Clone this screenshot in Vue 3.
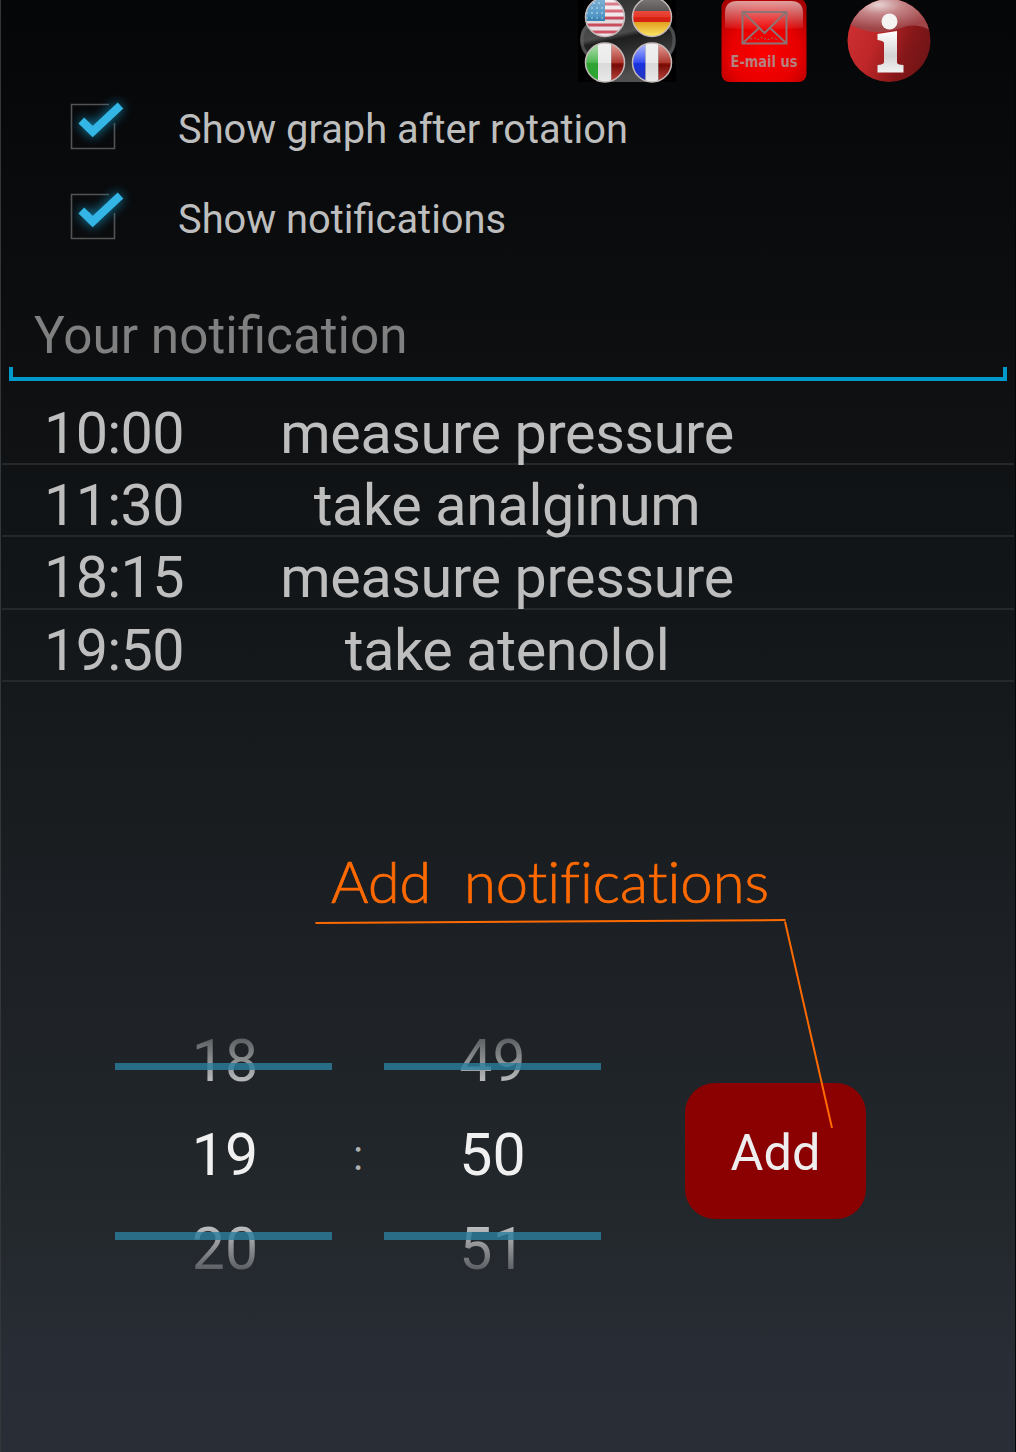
<script setup>
const options = ['Show graph after rotation', 'Show notifications']
const reminders = [
  { time: '10:00', text: 'measure pressure' },
  { time: '11:30', text: 'take analginum' },
  { time: '18:15', text: 'measure pressure' },
  { time: '19:50', text: 'take atenolol' },
]
const pickers = [
  ['18', '19', '20'],
  ['49', '50', '51'],
]
</script>

<template>
  <main class="screen">
    <header class="toolbar">
      <svg class="flags" width="100" height="85" viewBox="0 0 100 85">
        <defs>
          <linearGradient id="plate" x1="0" y1="0" x2=".25" y2="1">
            <stop offset="0" stop-color="#2c2c2c" /><stop offset=".48" stop-color="#4c4c4c" />
            <stop offset=".54" stop-color="#1e1e1e" /><stop offset="1" stop-color="#505050" />
          </linearGradient>
          <linearGradient id="gloss" x1="0" y1="0" x2="0" y2="1">
            <stop offset="0" stop-color="#fff" stop-opacity=".35" /><stop offset=".5" stop-color="#fff" stop-opacity=".1" />
            <stop offset=".52" stop-color="#000" stop-opacity=".06" /><stop offset="1" stop-color="#fff" stop-opacity=".08" />
          </linearGradient>
          <linearGradient id="gold" x1="0" y1="0" x2="0" y2="1">
            <stop offset="0" stop-color="#eda51c" /><stop offset="1" stop-color="#ffee62" />
          </linearGradient>
          <linearGradient id="green" x1="0" y1="0" x2="0" y2="1">
            <stop offset="0" stop-color="#8bcf8b" /><stop offset=".5" stop-color="#35ac39" /><stop offset="1" stop-color="#16a31b" />
          </linearGradient>
          <linearGradient id="blue" x1="0" y1="0" x2="0" y2="1">
            <stop offset="0" stop-color="#8798ff" /><stop offset=".5" stop-color="#1b35ef" /><stop offset="1" stop-color="#1526ae" />
          </linearGradient>
          <linearGradient id="crimson" x1="0" y1="0" x2="0" y2="1">
            <stop offset="0" stop-color="#d56d64" /><stop offset=".5" stop-color="#a01e14" /><stop offset=".55" stop-color="#7d0905" /><stop offset="1" stop-color="#c34137" />
          </linearGradient>
          <clipPath id="us"><circle cx="28" cy="17" r="19.500" /></clipPath>
          <clipPath id="de"><circle cx="75" cy="17" r="19.500" /></clipPath>
          <clipPath id="it"><circle cx="28" cy="62.500" r="19.500" /></clipPath>
          <clipPath id="fr"><circle cx="75" cy="62.500" r="19.500" /></clipPath>
        </defs>
        <rect x="1" width="98" height="82" fill="#000" />
        <path d="M18 0H84L90 22Q99 28 99 40Q99 52 90 58L82 82H20L12 58Q3 52 3 40Q3 28 12 22Z" fill="url(#plate)" />
        <path d="M11 26Q5 30 5 40Q5 50 11 54M91 26Q97 30 97 40Q97 50 91 54" fill="none" stroke="#5e5e5e" stroke-width="3" opacity=".7" />
        <g clip-path="url(#us)">
          <rect x="5" y="-3" width="44" height="42" fill="#eee6ea" />
          <path d="M5 4H48M5 11H48M5 18H48M5 25H48M5 32H48" stroke="#cf4c5e" stroke-width="3" />
          <rect x="5" y="-3" width="23" height="24" fill="#3b89bd" />
          <path d="M11 3H26M9 8H26M9 13H26M9 18H26" stroke="#8fc3e2" stroke-width="1.500" stroke-dasharray="2 3" />
        </g>
        <g clip-path="url(#de)">
          <rect x="54" y="-3" width="42" height="14" fill="#383333" />
          <rect x="54" y="11" width="42" height="11" fill="#e32212" />
          <rect x="54" y="22" width="42" height="16" fill="url(#gold)" />
        </g>
        <g clip-path="url(#it)">
          <rect x="7" y="42" width="14" height="42" fill="url(#green)" />
          <rect x="21" y="42" width="13.500" height="42" fill="#e8e8e8" />
          <rect x="34.500" y="42" width="15" height="42" fill="url(#crimson)" />
        </g>
        <g clip-path="url(#fr)">
          <rect x="54" y="42" width="14.500" height="42" fill="url(#blue)" />
          <rect x="68.500" y="42" width="13" height="42" fill="#e8e8e8" />
          <rect x="81.500" y="42" width="15" height="42" fill="url(#crimson)" />
        </g>
        <g fill="url(#gloss)" stroke="#c4b9b9" stroke-width="1.500">
          <circle cx="28" cy="17" r="19.500" /><circle cx="75" cy="17" r="19.500" />
          <circle cx="28" cy="62.500" r="19.500" /><circle cx="75" cy="62.500" r="19.500" />
        </g>
      </svg>

      <svg class="mail" width="86" height="85" viewBox="0 0 86 85">
        <defs>
          <radialGradient id="mailRed" cx=".5" cy=".65" r=".72">
            <stop offset="0" stop-color="#fb0000" /><stop offset=".55" stop-color="#e80000" /><stop offset="1" stop-color="#a80000" />
          </radialGradient>
          <linearGradient id="mailGloss" x1="0" y1="0" x2="0" y2="1">
            <stop offset="0" stop-color="#fff" stop-opacity=".62" /><stop offset="1" stop-color="#fff" stop-opacity=".03" />
          </linearGradient>
        </defs>
        <rect x=".5" y="-1" width="85" height="83" rx="8" fill="url(#mailRed)" />
        <path d="M4 28V13Q4 1 16 1H70Q82 1 82 13V28Q43 32 4 28Z" fill="url(#mailGloss)" />
        <g fill="none" stroke="#8c7474" stroke-width="2">
          <rect x="21.500" y="12" width="44" height="31.500" />
          <path d="M22 12L43.500 33L65 12M22 43L39 27M65 43L48 27" />
          <path d="M29 39L33 38L37 40L41 37L46 40L51 38L58 40" stroke-width="1" stroke-dasharray="2 2" />
        </g>
        <text x="9.500" y="66.500" textLength="67" lengthAdjust="spacingAndGlyphs" class="mail-label">E-mail us</text>
      </svg>

      <svg class="info" width="84" height="85" viewBox="0 0 84 85">
        <defs>
          <linearGradient id="ball" x1="0" y1=".2" x2="1" y2=".6">
            <stop offset="0" stop-color="#cf3032" /><stop offset=".4" stop-color="#bd2628" /><stop offset=".75" stop-color="#851719" /><stop offset="1" stop-color="#701416" />
          </linearGradient>
          <radialGradient id="shine" cx=".38" cy=".2" r=".7">
            <stop offset="0" stop-color="#e6d3d3" /><stop offset=".4" stop-color="#c58587" /><stop offset="1" stop-color="#9f4548" />
          </radialGradient>
          <linearGradient id="letter" x1="0" y1="0" x2="0" y2="1">
            <stop offset="0" stop-color="#fff" /><stop offset=".6" stop-color="#d3d3d3" /><stop offset="1" stop-color="#f2f2f2" />
          </linearGradient>
          <clipPath id="disc"><circle cx="42" cy="40.500" r="41.500" /></clipPath>
        </defs>
        <g clip-path="url(#disc)">
          <rect width="84" height="85" fill="url(#ball)" />
          <path d="M0-2H84V31Q70 22 54 28Q26 38 0 23Z" fill="url(#shine)" />
        </g>
        <circle cx="42.500" cy="21.500" r="8" fill="#f6f3f3" />
        <path d="M30.500 34L50 31V62.500Q50 64.500 56.500 65V72.500H30.500V65Q37 64.500 37 62V43Q37 41 30.500 40Z" fill="url(#letter)" />
      </svg>
    </header>

    <label v-for="option in options" :key="option" class="option">
      <svg class="check" width="80" height="90" viewBox="0 0 80 90">
        <path d="M49 19.500H11.500V63.500H54.500V38" fill="none" stroke="#525354" stroke-width="1.600" />
        <path class="tick" d="M21.300 35.500L32.700 46.500L60.500 20.500" />
      </svg>
      <span>{{ option }}</span>
    </label>

    <section class="field">
      <span>Your notification</span>
    </section>

    <ul class="reminders">
      <li v-for="(item, i) in reminders" :key="i">
        <time>{{ item.time }}</time>
        <span class="what">{{ item.text }}</span>
      </li>
    </ul>

    <section class="editor">
      <div class="picker">
        <span v-for="n in pickers[0]" :key="n">{{ n }}</span>
      </div>
      <div class="colon">:</div>
      <div class="picker">
        <span v-for="n in pickers[1]" :key="n">{{ n }}</span>
      </div>
      <button class="add">Add</button>
    </section>

    <svg class="callout" width="1016" height="1452" viewBox="0 0 1016 1452">
      <path d="M315.500 923L785.500 920M785 921.500L832 1128" fill="none" stroke="#ff6a00" stroke-width="2" />
      <g class="hand">
        <text x="331" y="903" textLength="100" lengthAdjust="spacingAndGlyphs">Add</text>
        <text x="464" y="903" textLength="305" lengthAdjust="spacingAndGlyphs">notifications</text>
      </g>
    </svg>
  </main>
</template>

<style>
body { margin: 0; background: #000; }
</style>

<style scoped>
.screen {
  position: relative;
  box-sizing: border-box;
  width: 1016px;
  height: 1452px;
  overflow: hidden;
  display: flex;
  flex-direction: column;
  border-left: 1px solid #34373a;
  border-right: 1px solid #050607;
  background: linear-gradient(#050607 0%, #0c0d0f 20%, #14181a 46%, #1c2024 64%, #22272b 82%, #282c34 93%, #292d35 100%);
  color: #bebebe;
  font-family: Roboto, "Noto Sans", sans-serif;
}
.toolbar { display: flex; height: 85px; padding-left: 576px; flex: none; }
.toolbar svg { display: block; }
.mail { margin-left: 44px; overflow: visible; }
.info { margin-left: 40px; }
.mail-label { font: bold 15px "DejaVu Sans", sans-serif; fill: #b58080; }
.option { display: flex; align-items: center; height: 90px; flex: none; font-size: 39.850px; line-height: 90px; white-space: nowrap; }
.check { margin-left: 59px; margin-right: 38px; flex: none; overflow: visible; }
.tick { fill: none; stroke: #33b5e5; stroke-width: 8.200px; filter: drop-shadow(0 0 6px #168fba); }
.field {
  position: relative;
  flex: none;
  height: 92px;
  margin: 24px 8px 0;
  padding-left: 25px;
  box-sizing: border-box;
  border-bottom: 4px solid #0099cc;
  font-size: 51.300px;
  line-height: 94px;
  color: #808080;
}
.field::before, .field::after {
  content: "";
  position: absolute;
  bottom: 0;
  width: 4px;
  height: 10px;
  background: #0099cc;
}
.field::before { left: 0; }
.field::after { right: 0; }
.reminders { list-style: none; margin: 12px 1px 0; padding: 0; flex: none; }
.reminders li {
  display: flex;
  box-sizing: border-box;
  height: 72.200px;
  border-bottom: 2px solid #25282b;
  font-size: 57.500px;
  line-height: 81px;
}
.reminders time { width: 224px; padding-left: 42px; box-sizing: border-box; letter-spacing: -.65px; }
.what { width: 562px; text-align: center; white-space: nowrap; letter-spacing: -.37px; }
.editor { display: flex; align-items: center; margin-top: 332px; height: 283px; padding-left: 114px; flex: none; }
.picker { position: relative; width: 217px; height: 283px; display: flex; flex-direction: column; text-align: center; font-size: 59px; line-height: 93px; color: #f0f0f0; }
.picker::before, .picker::after { content: ""; position: absolute; left: 0; width: 217px; height: 7px; background: rgba(42, 126, 158, .8); z-index: 1; }
.picker::before { top: 49px; }
.picker::after { top: 218px; height: 8px; }
.picker span { height: 94.500px; padding-left: 3px; }
.colon + .picker span { padding-left: 0; }
.picker span:first-child { color: transparent; background: linear-gradient(#5b5e61 25%, #bfc0c1 75%); background-clip: text; -webkit-background-clip: text; }
.picker span:last-child { color: transparent; background: linear-gradient(#bfc0c1 25%, #54575c 75%); background-clip: text; -webkit-background-clip: text; }
.colon { width: 52px; text-align: center; font-size: 42px; color: #aeb0b1; }
.add { box-sizing: border-box; width: 181px; height: 136px; margin: -8px 0 0 84px; padding: 4px 0 0; border: 0; border-radius: 30px; background: #8b0000; color: #eee; font: 50.500px/60px Roboto, sans-serif; }
.callout { position: absolute; left: -1px; top: 0; z-index: 2; pointer-events: none; }
.hand { font: 300 58px Lato, sans-serif; font-variant-ligatures: none; fill: #ff6a00; stroke: #ff6a00; stroke-width: .7px; }
</style>
